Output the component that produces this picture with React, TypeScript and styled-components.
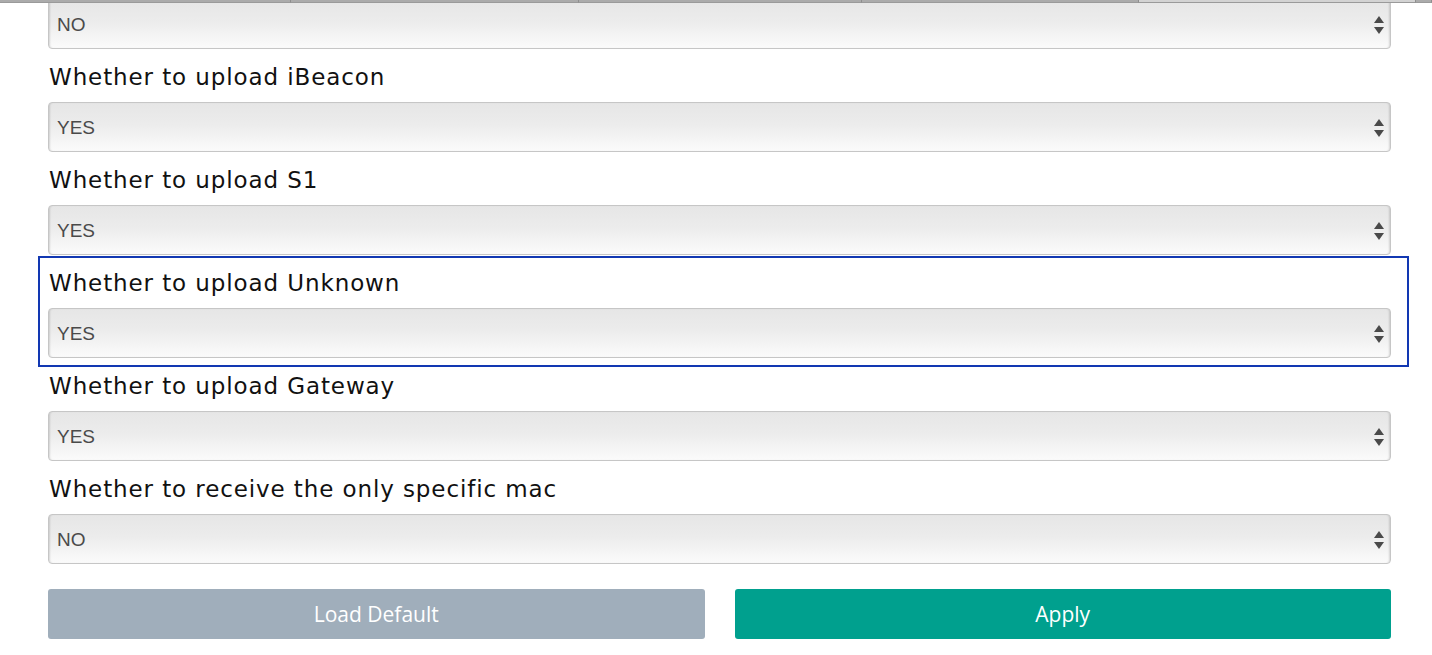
import React from "react";
import styled, { createGlobalStyle } from "styled-components";

const Global = createGlobalStyle`
  html, body { margin: 0; padding: 0; background: #fff; }
  body { width: 1432px; height: 655px; overflow: hidden; }
`;

const Page = styled.div`
  width: 1432px;
  height: 655px;
  display: flex;
  flex-direction: column;
  overflow: hidden;
`;

const TabStrip = styled.div`
  position: relative;
  z-index: 2;
  display: flex;
  height: 3px;
  flex-shrink: 0;
`;

const Tab = styled.div<{ $w: number; $light?: boolean }>`
  width: ${(p) => p.$w}px;
  flex-shrink: 0;
  background: ${(p) => (p.$light ? "#d3d3d3" : "#ababab")};
  border-right: 1px solid #8e8e8e;
  border-bottom: 1px solid #9a9a9a;
  box-sizing: border-box;
`;

const Form = styled.div`
  margin-top: -4px;
  padding: 0 41px 0 48px;
  display: flex;
  flex-direction: column;
`;

const Group = styled.div`
  position: relative;
  display: flex;
  flex-direction: column;
`;

const Highlight = styled.div`
  position: absolute;
  left: -10px;
  right: -18px;
  top: 1px;
  bottom: -9px;
  border: 2px solid #1238b2;
  pointer-events: none;
`;

const Label = styled.div`
  height: 53px;
  display: flex;
  align-items: center;
  padding-left: 1px;
  padding-top: 3px;
  box-sizing: border-box;
  font-family: "DejaVu Sans", Verdana, sans-serif;
  font-size: 23px;
  letter-spacing: 0.9px;
  color: #111;
`;

const SelectBox = styled.div`
  position: relative;
  height: 50px;
  box-sizing: border-box;
  border: 1px solid #c6c6c6;
  border-radius: 4px;
  background: linear-gradient(to bottom, #e6e6e6 0%, #ececec 45%, #fbfbfb 100%);
  box-shadow: inset 2px 0 2px -1px rgba(0, 0, 0, 0.14),
    inset -2px 0 2px -1px rgba(0, 0, 0, 0.14);
  display: flex;
  align-items: center;
  padding-left: 8px;
  padding-top: 2px;
  font-family: "Liberation Sans", Arial, sans-serif;
  font-size: 19px;
  color: #4a4a4a;
`;

const Arrows = styled.svg`
  position: absolute;
  right: 6px;
  top: 50%;
  margin-top: -8px;
`;

const Buttons = styled.div`
  display: grid;
  grid-template-columns: 1fr 1fr;
  gap: 30px;
  margin-top: 25px;
`;

const Button = styled.button<{ $variant: "default" | "primary" }>`
  height: 50px;
  border: none;
  border-radius: 3px;
  background: ${(p) => (p.$variant === "primary" ? "#00a08e" : "#a0aebb")};
  color: #fff;
  font-family: "Open Sans", sans-serif;
  font-size: 21px;
  padding: 0;
  cursor: pointer;
`;

const Select = ({ value }: { value: string }) => (
  <SelectBox>
    {value}
    <Arrows width="10" height="18" viewBox="0 0 10 18">
      <polygon points="5,0 10,7 0,7" fill="#4a4a4a" />
      <polygon points="0,11 10,11 5,18" fill="#4a4a4a" />
    </Arrows>
  </SelectBox>
);

const rows: { label: string; value: string; focused?: boolean }[] = [
  { label: "Whether to upload iBeacon", value: "YES" },
  { label: "Whether to upload S1", value: "YES" },
  { label: "Whether to upload Unknown", value: "YES", focused: true },
  { label: "Whether to upload Gateway", value: "YES" },
  { label: "Whether to receive the only specific mac", value: "NO" },
];

export default function App() {
  return (
    <Page>
      <Global />
      <TabStrip>
        <Tab $w={291} />
        <Tab $w={288} />
        <Tab $w={283} />
        <Tab $w={277} />
        <Tab $w={277} $light />
        <Tab $w={16} />
      </TabStrip>
      <Form>
        <Select value="NO" />
        {rows.map((r) => (
          <Group key={r.label}>
            {r.focused && <Highlight />}
            <Label>{r.label}</Label>
            <Select value={r.value} />
          </Group>
        ))}
        <Buttons>
          <Button $variant="default">Load Default</Button>
          <Button $variant="primary">Apply</Button>
        </Buttons>
      </Form>
    </Page>
  );
}
